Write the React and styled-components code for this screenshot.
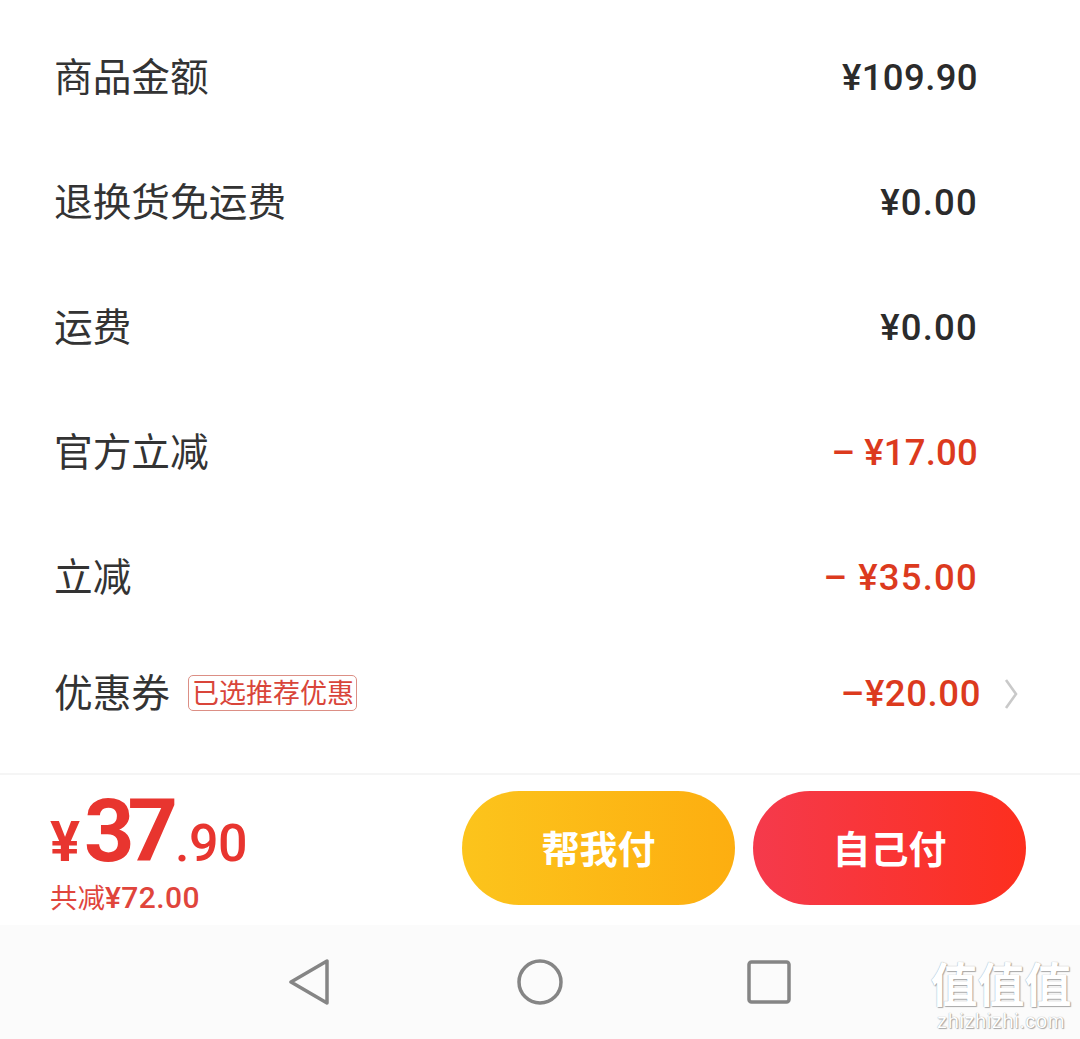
import React from 'react';
import styled, { createGlobalStyle } from 'styled-components';

const CJK = '"Noto Sans CJK SC", "Noto Sans", sans-serif';
const NUM = 'Roboto, "Noto Sans CJK SC", sans-serif';

const Global = createGlobalStyle`
  html, body { margin: 0; padding: 0; background: #fff; }
  * { box-sizing: border-box; }
`;
const Page = styled.div`
  position: relative;
  width: 1080px;
  height: 1039px;
  overflow: hidden;
  display: flex;
  flex-direction: column;
  background: #fff;
  font-family: ${CJK};
`;
const List = styled.div`
  padding: 15px 0 0 54px;
  height: 773px;
  flex: none;
`;
const Row = styled.div`
  height: ${p => p.$h || 125}px;
  display: flex;
  align-items: center;
  justify-content: space-between;
  padding-right: ${p => p.$pr || 102}px;
`;
const Label = styled.div`
  font-size: 38.7px;
  line-height: 50px;
  padding-bottom: 8px;
  color: #333;
`;
const Amount = styled.div`
  font-family: ${NUM};
  font-size: 36.5px;
  line-height: 44px;
  font-weight: 500;
  letter-spacing: ${p => p.$ls ?? 0.5}px;
  color: ${p => (p.$red ? '#dc3a1e' : '#2b2b2b')};
  white-space: pre;
`;
const Left = styled.div`
  display: flex;
  align-items: center;
  gap: 18px;
`;
const Tag = styled.div`
  height: 36px;
  width: 169px;
  margin-top: -2px;
  padding-left: 1px;
  border: 1px solid #dc8f85;
  border-radius: 5px;
  font-size: 27px;
  line-height: 31px;
  color: #d9453a;
  text-align: center;
  white-space: nowrap;
`;
const Right = styled.div`
  display: flex;
  align-items: center;
  gap: 23px;
`;
const Chevron = styled.svg`
  width: 14px;
  height: 32px;
  display: block;
`;
const Footer = styled.div`
  height: 152px;
  flex: none;
  border-top: 2px solid #f5f5f5;
  display: flex;
  justify-content: space-between;
  padding: 16px 54px 0 50px;
`;
const PriceBlock = styled.div`
  display: flex;
  flex-direction: column;
`;
const Price = styled.div`
  display: flex;
  align-items: baseline;
  height: 80px;
  color: #e8352f;
  font-family: ${NUM};
  font-weight: 700;
  line-height: 80px;
`;
const Yen = styled.span`
  font-size: 56px;
  margin-right: 4px;
`;
const Big = styled.span`
  font-size: 88px;
  letter-spacing: -7px;
`;
const Small = styled.span`
  font-size: 52px;
  font-weight: 500;
  margin-left: 4px;
  letter-spacing: -0.5px;
`;
const Saved = styled.div`
  margin-top: 7px;
  font-size: 27.5px;
  line-height: 36px;
  color: #e0453c;
`;
const SavedNum = styled.span`
  font-family: ${NUM};
  font-size: 30px;
  font-weight: 500;
  letter-spacing: 0.4px;
`;
const Buttons = styled.div`
  display: flex;
  gap: 18px;
`;
const PayBtn = styled.div`
  width: 273px;
  height: 114px;
  border-radius: 57px;
  background: ${p => p.$bg};
  color: #fff;
  font-size: 38px;
  font-weight: 700;
  display: flex;
  align-items: center;
  justify-content: center;
  padding-bottom: 4px;
`;
const Nav = styled.div`
  flex: 1;
  background: #fbfbfb;
  display: flex;
  align-items: center;
  justify-content: center;
  gap: 183px;
`;
const NavIcon = styled.svg`
  width: 46px;
  height: 46px;
  display: block;
`;
const Watermark = styled.div`
  position: absolute;
  right: 8px;
  bottom: 6px;
  width: 142px;
  text-align: center;
  color: #fff;
  text-shadow: 0 0 1px #8f8f8f, 1px 1px 1px #aaa;
`;
const WmChars = styled.div`
  font-size: 47px;
  font-weight: 700;
  line-height: 50px;
  white-space: nowrap;
`;
const WmUrl = styled.div`
  font-family: "Liberation Sans", sans-serif;
  font-size: 20px;
  line-height: 24px;
  letter-spacing: 0.6px;
  margin-top: 2px;
`;

const rows = [
  ['商品金额', '¥109.90', false, 0.4],
  ['退换货免运费', '¥0.00', false, 1.2],
  ['运费', '¥0.00', false, 1.2],
  ['官方立减', '– ¥17.00', true, 0.2],
  ['立减', '– ¥35.00', true, 1.2],
];

export default function App() {
  return (
    <Page>
      <Global />
      <List>
        {rows.map(([l, v, r, ls]) => (
          <Row key={l}>
            <Label>{l}</Label>
            <Amount $red={r} $ls={ls}>{v}</Amount>
          </Row>
        ))}
        <Row $h={107} $pr={62}>
          <Left>
            <Label>优惠券</Label>
            <Tag>已选推荐优惠</Tag>
          </Left>
          <Right>
            <Amount $red $ls={0.6}>–¥20.00</Amount>
            <Chevron viewBox="0 0 14 32">
              <path d="M2 2 L12 16 L2 30" fill="none" stroke="#c9c9c9" strokeWidth="2.6" />
            </Chevron>
          </Right>
        </Row>
      </List>
      <Footer>
        <PriceBlock>
          <Price>
            <Yen>¥</Yen>
            <Big>37</Big>
            <Small>.90</Small>
          </Price>
          <Saved>
            共减<SavedNum>¥72.00</SavedNum>
          </Saved>
        </PriceBlock>
        <Buttons>
          <PayBtn $bg="linear-gradient(90deg, #fcc41c, #fdae10)">帮我付</PayBtn>
          <PayBtn $bg="linear-gradient(90deg, #f53a4c, #fd2f1e)">自己付</PayBtn>
        </Buttons>
      </Footer>
      <Nav>
        <NavIcon viewBox="0 0 46 46">
          <path d="M39 2 V44 L3 23 Z" fill="none" stroke="#858585" strokeWidth="3.5" strokeLinejoin="round" />
        </NavIcon>
        <NavIcon viewBox="0 0 46 46">
          <circle cx="23" cy="23" r="21" fill="none" stroke="#858585" strokeWidth="3.5" />
        </NavIcon>
        <NavIcon viewBox="0 0 46 46">
          <rect x="3" y="3" width="40" height="40" rx="2.5" fill="none" stroke="#858585" strokeWidth="3.5" />
        </NavIcon>
      </Nav>
      <Watermark>
        <WmChars>值值值</WmChars>
        <WmUrl>zhizhizhi.com</WmUrl>
      </Watermark>
    </Page>
  );
}
